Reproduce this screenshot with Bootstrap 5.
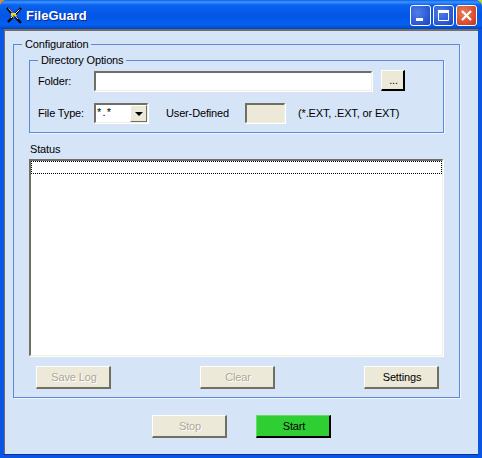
<!DOCTYPE html>
<html lang="en">
<head>
  <meta charset="UTF-8" />
  <meta name="viewport" content="width=device-width, initial-scale=1.0"/>
  <title>FileGuard</title>
  <link href="https://cdn.jsdelivr.net/npm/bootstrap@5.3.3/dist/css/bootstrap.min.css" rel="stylesheet"/>
  <style>
    html, body { height: 100%; overflow: hidden; }
    body { background: linear-gradient(90deg, #d98b3c 50%, #b4d636 50%); font: 11px/14px "Liberation Sans", Arial, sans-serif; letter-spacing: -.15px; color: #000; }

    /* window frame */
    .xp-window { width: 482px; height: 458px; border-radius: 7px 7px 0 0; overflow: hidden; background: #0a55e4; }
    .xp-title { height: 29px; padding: 2px 5px 0 5px; background: linear-gradient(180deg, #0a5fe8 0, #3d95ff 2px, #0a62ef 5px, #0355e6 16px, #0560f0 25px, #0243c8 29px); }
    .xp-title-text { font: bold 13px/16px "Liberation Sans", Arial, sans-serif; letter-spacing: 0; color: #fff; text-shadow: 1px 1px 0 #0a2a90; margin-left: 3px; }
    .xp-ctl { width: 21px; height: 21px; border: 1px solid #fff; border-radius: 3px; margin-left: 2px; background: radial-gradient(circle at 35% 35%, #4f7fe8, #2a55d0 70%, #1c3fb0); }
    .xp-close { background: radial-gradient(circle at 35% 35%, #e8805c, #d6492a 70%, #b83214); }
    .xp-body { height: 425px; margin: 0 4px 4px 4px; padding: 6px 18px 0 8px; background: #d6e4f7; border-left: 1px solid #716f64; border-top: 2px solid #716f64; box-shadow: 0 1px 0 #0a2fa0; }

    /* group boxes */
    .xp-group { border: 1px solid #5a8ad8; box-shadow: 1px 1px 0 #f0f5fd; margin: 0; min-width: 0; }
    .xp-group > legend { float: none; width: auto; font-size: 11px; line-height: 14px; padding: 0 3px; margin: 0; }
    .xp-config { height: 361px; padding: 2px 15px 0 15px; }
    .xp-config > legend { margin-left: -7px; }
    .xp-dir { height: 80px; padding: 3px 0 0 8px; }

    /* sunken fields */
    .xp-label { width: 56px; }
    .xp-input { height: 20px; border-style: solid; border-width: 2px 1px 1px 2px; border-color: #716f64 #f1efe2 #f1efe2 #716f64; background: #fff; box-shadow: 1px 1px 0 #fff; }
    .xp-folder { width: 278px; margin-right: 9px; }
    .xp-userdef { width: 40px; background: #ece9d8; margin-right: 13px; }
    .xp-label-user { width: 79px; }
    .xp-row-type { margin-top: 12px; }
    .xp-combo { width: 54px; height: 20px; margin-right: 18px; border-style: solid; border-width: 2px 1px 1px 2px; border-color: #716f64 #f1efe2 #f1efe2 #716f64; background: #fff; box-shadow: 1px 1px 0 #fff; padding-left: 1px; }
    .xp-combo-value { flex: 1; line-height: 14px; letter-spacing: 1.2px; }
    .xp-combo-arrow { width: 17px; background: #ece9d8; border: 1px solid; border-color: #fff #716f64 #716f64 #fff; }
    .xp-combo-arrow::after { content: ""; border-style: solid; border-width: 4px 4px 0 4px; border-color: #000 transparent transparent; }
    .xp-status { margin: 9px 0 0 1px; }
    .xp-list { width: 414px; height: 197px; margin-top: 3px; padding: 0; border-style: solid; border-width: 2px 1px 1px 2px; border-color: #716f64 #f1efe2 #f1efe2 #716f64; border-radius: 0; background: #fff; box-shadow: 1px 1px 0 #fff; }
    .xp-list-row { height: 13px; border: 1px dotted #000; }

    /* push buttons */
    .xp-btn { width: 75px; height: 23px; padding: 0 0 0 2px; border-radius: 0; font: 11px/14px "Liberation Sans", Arial, sans-serif; letter-spacing: -.15px; background: #ece9d8; color: #000; border-style: solid; border-width: 1px 2px 2px 1px; border-color: #fff #716f64 #716f64 #fff; }
    .xp-btn:disabled { background: #ece9d8; color: #aca899; text-shadow: 1px 1px 0 #fff; opacity: 1; border-color: #fff #716f64 #716f64 #fff; }
    .xp-btn-small { width: 24px; height: 21px; border-color: #fff #000 #000 #fff; }
    .xp-btn-start { background: #2fcf34; border-color: #60dd64 #000 #000 #60dd64; }
    .xp-actions { margin: 10px 4px 0 7px; width: 403px; }
    .xp-footer { margin-top: 17px; gap: 29px; padding-left: 139px; }
  </style>
</head>
<body class="m-0">
  <div class="xp-window d-flex flex-column">
    <!-- Title bar -->
    <div class="xp-title d-flex align-items-center">
      <svg width="18" height="18" viewBox="0 0 18 18">
        <path d="M2 1 16 16" stroke="#000" stroke-width="2.4"/>
        <path d="M16 1 3 15" stroke="#000" stroke-width="2.4"/>
        <path d="M14.5 2.5 6 11" stroke="#fff" stroke-width="1"/>
        <path d="M3.5 1.5 13 12" stroke="#c8c8d8" stroke-width="1"/>
        <path d="M6 6h4l2 3-3 2-3-2z" fill="#e8d820"/>
        <path d="M8 8l3 2-2 2z" fill="#2030a0"/>
      </svg>
      <span class="xp-title-text flex-grow-1">FileGuard</span>
      <div class="xp-ctl d-flex">
        <svg width="19" height="19" viewBox="0 0 19 19"><rect x="5" y="12" width="7" height="3" fill="#fff"/></svg>
      </div>
      <div class="xp-ctl d-flex">
        <svg width="19" height="19" viewBox="0 0 19 19"><path d="M4.5 5.5h10v9h-10z" fill="none" stroke="#fff"/><rect x="4" y="4" width="11" height="3" fill="#fff"/></svg>
      </div>
      <div class="xp-ctl xp-close d-flex">
        <svg width="19" height="19" viewBox="0 0 19 19"><path d="M5 5l9 9M14 5l-9 9" stroke="#fff" stroke-width="2.2"/></svg>
      </div>
    </div>

    <!-- Client area -->
    <div class="xp-body">
      <fieldset class="xp-group xp-config">
        <legend>Configuration</legend>
        <fieldset class="xp-group xp-dir">
          <legend>Directory Options</legend>
          <div class="d-flex align-items-center">
            <span class="xp-label">Folder:</span>
            <div class="xp-input xp-folder"></div>
            <button class="btn xp-btn xp-btn-small">...</button>
          </div>
          <div class="d-flex align-items-center xp-row-type">
            <span class="xp-label">File Type:</span>
            <div class="xp-combo d-flex">
              <span class="xp-combo-value">*.*</span>
              <span class="xp-combo-arrow d-flex align-items-center justify-content-center"></span>
            </div>
            <span class="xp-label-user">User-Defined</span>
            <div class="xp-input xp-userdef"></div>
            <span>(*.EXT, .EXT, or EXT)</span>
          </div>
        </fieldset>
        <div class="xp-status">Status</div>
        <div class="xp-list">
          <div class="xp-list-row"></div>
        </div>
        <div class="xp-actions d-flex justify-content-between">
          <button class="btn xp-btn" disabled>Save Log</button>
          <button class="btn xp-btn" disabled>Clear</button>
          <button class="btn xp-btn">Settings</button>
        </div>
      </fieldset>
      <div class="xp-footer d-flex">
        <button class="btn xp-btn" disabled>Stop</button>
        <button class="btn xp-btn xp-btn-start">Start</button>
      </div>
    </div>
  </div>
</body>
</html>
